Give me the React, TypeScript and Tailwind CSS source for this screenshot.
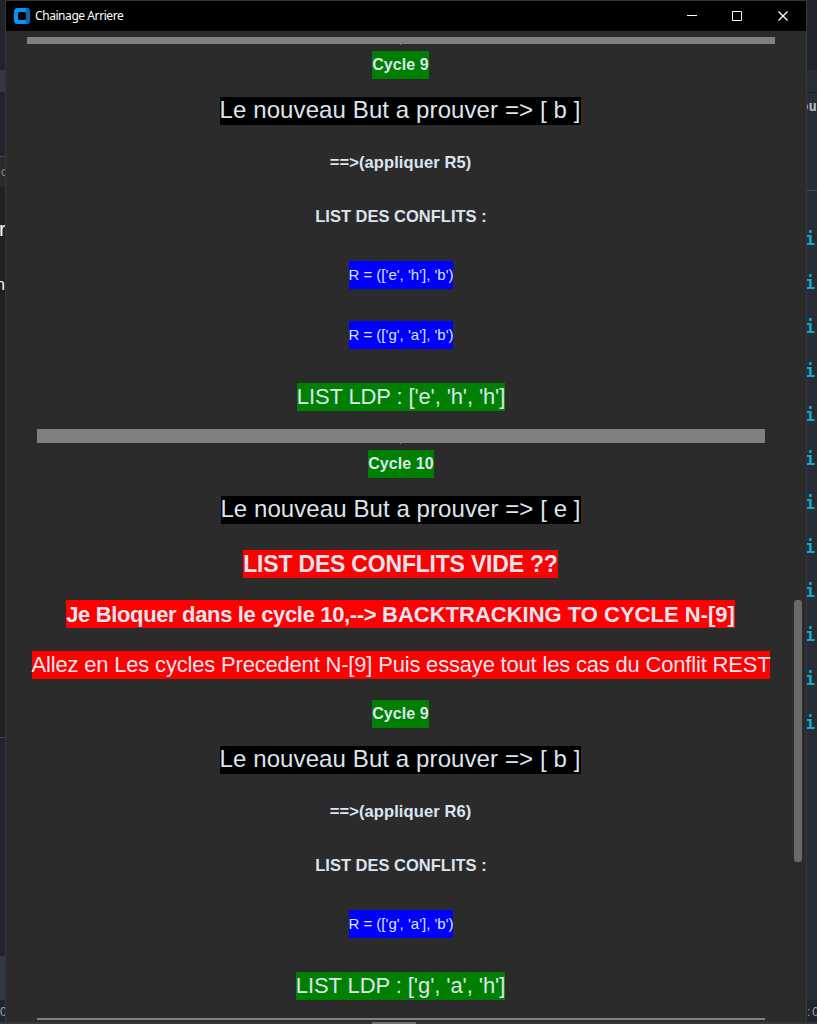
import React from "react";

type RowData = { text: React.ReactNode; cls: string };

const goal = "mt-[18px] pb-[2px] pr-px bg-black text-[24px]";
const cycle = "bg-[#008000] text-[16px] font-bold tracking-[0.1px]";
const rule = "w-[104px] bg-[#0000ff] text-[15px]";
const apply = "mt-[23px] w-[141px] mr-px text-[16.5px] font-bold tracking-[0.1px]";
const conflicts = "mt-[26px] w-[172px] text-[16.5px] font-bold";

const blocked = (
  <>
    <span className="tracking-[-0.35px]">{"Je Bloquer dans le cycle 10,--> "}</span>
    <span>BACKTRACKING TO CYCLE N-[9]</span>
  </>
);

const first: RowData[] = [
  { text: "Cycle 9", cls: `${cycle} mt-[6px] w-[57px] mr-px` },
  { text: "Le nouveau But a prouver => [ b ]", cls: `${goal} w-[361px] mr-px tracking-[0.1px]` },
  { text: "==>(appliquer R5)", cls: apply },
  { text: "LIST DES CONFLITS :", cls: conflicts },
  { text: "R = (['e', 'h'], 'b')", cls: `${rule} mt-[31px]` },
  { text: "R = (['g', 'a'], 'b')", cls: `${rule} mt-[32px]` },
  { text: "LIST LDP : ['e', 'h', 'h']", cls: "mt-[34px] w-[208px] bg-[#008000] text-[22px] tracking-[-0.12px]" },
];

const second: RowData[] = [
  { text: "Cycle 10", cls: `${cycle} mt-[6px] w-[66px]` },
  { text: "Le nouveau But a prouver => [ e ]", cls: `${goal} w-[360px] tracking-[0.08px]` },
  { text: "LIST DES CONFLITS VIDE ??", cls: "mt-[26px] w-[315px] mr-px bg-[#ff0000] text-[23px] font-bold tracking-[-0.2px]" },
  { text: blocked, cls: "mt-[22px] w-[669px] mr-px pt-[2px] bg-[#ff0000] text-[22px] font-bold" },
  { text: "Allez en Les cycles Precedent N-[9] Puis essaye tout les cas du Conflit REST", cls: "mt-[23px] w-[738px] bg-[#ff0000] text-[22px] tracking-[-0.19px]" },
  { text: "Cycle 9", cls: `${cycle} mt-[21px] w-[57px] mr-px` },
  { text: "Le nouveau But a prouver => [ b ]", cls: `${goal} w-[361px] mr-px tracking-[0.1px]` },
  { text: "==>(appliquer R6)", cls: apply },
  { text: "LIST DES CONFLITS :", cls: conflicts },
  { text: "R = (['g', 'a'], 'b')", cls: `${rule} mt-[31px]` },
  { text: "LIST LDP : ['g', 'a', 'h']", cls: "mt-[34px] w-[209px] mr-px bg-[#008000] text-[22px] tracking-[-0.08px]" },
];

function Row({ text, cls }: RowData) {
  return (
    <div className={`flex h-7 shrink-0 items-center justify-center whitespace-nowrap leading-7 text-[#dce4ee] ${cls}`}>
      <span>{text}</span>
    </div>
  );
}

function TitleBar() {
  return (
    <header className="flex h-[31px] shrink-0 items-center border-t border-[#353535] bg-black text-white">
      <svg className="ml-2 h-4 w-4" viewBox="0 0 16 16">
        <rect width="16" height="16" rx="3.5" fill="#0595f5" />
        <path d="M12 0h.5A3.5 3.5 0 0 1 16 3.5v9a3.5 3.5 0 0 1-3.5 3.5H12z" fill="#0768b8" />
        <rect x="4" y="4" width="8" height="8" rx="1.5" fill="#000" />
      </svg>
      <span className="ml-[5px] font-['Noto_Sans','Open_Sans',sans-serif] text-[12px] leading-4 tracking-[-0.43px]">Chainage Arriere</span>
      <svg className="ml-auto mr-[16px] h-[11px] w-[103px]" viewBox="0 0 103 11" fill="none" stroke="#fff">
        <path d="M0 4.5h10M45.5.5h9v9h-9z" />
        <path d="M91.5 .5l9 9M100.5 .5l-9 9" strokeWidth="1.3" />
      </svg>
    </header>
  );
}

function LeftEdge() {
  return (
    <aside className="flex w-[6px] shrink-0 flex-col overflow-hidden border-r border-[#333436] bg-[#21252b] whitespace-nowrap">
      <div className="mt-[70px] h-[22px] shrink-0 bg-[#333842]" />
      <div className="mt-[64px] h-[31px] shrink-0 border-t border-[#44474b] bg-[#2b2b2b]">
        <span className="block pl-px text-[12px] leading-[30px] text-[#898989]">c</span>
      </div>
      <div className="h-[550px] shrink-0 bg-[#202020] text-white">
        <span className="-ml-px block pt-[30px] text-[21px] leading-6">r</span>
        <span className="-ml-[4px] block pt-[34px] text-[16px] leading-5">n</span>
      </div>
      <div className="h-px shrink-0 bg-[#44474b]" />
      <div className="mt-[218px] h-[44px] shrink-0 bg-[#333842]" />
      <span className="block text-[12px] leading-[24px] tracking-[-1px] text-[#9da5b4]">0</span>
    </aside>
  );
}

function RightEdge() {
  return (
    <aside className="flex w-[11px] shrink-0 flex-col overflow-hidden border-l border-[#333842] bg-[#282c34] font-['DejaVu_Sans_Mono',monospace] whitespace-nowrap">
      <div className="h-[70px] shrink-0 bg-[#21252b]" />
      <div className="h-[23px] shrink-0 border-b border-[#1b1d22]" />
      <span className="-ml-[7px] block h-[97px] shrink-0 pt-px text-[14px] font-bold leading-6 text-[#b4bac5]">ou</span>
      <div className="h-px shrink-0 bg-[#464a52]" />
      <div className="flex h-[809px] shrink-0 flex-col pt-[26px] text-[17px] font-bold leading-[44px] text-[#12a8cd]">
        {Array.from({ length: 12 }, (_, i) => (
          <span key={i} className="-ml-[2px] block h-11 shrink-0">i</span>
        ))}
      </div>
      <div className="h-6 shrink-0 bg-[#21252b] font-['Liberation_Sans',sans-serif] text-[12px] leading-6 tracking-[2px] text-[#9da5b4]">:0</div>
    </aside>
  );
}

function Divider({ cls }: { cls: string }) {
  return (
    <>
      <div className={`shrink-0 bg-[#808080] ${cls}`} />
      <div className="mr-px h-px w-px shrink-0 bg-[#808080]" />
    </>
  );
}

export default function App() {
  return (
    <div className="flex h-[1024px] w-[817px] flex-col overflow-hidden bg-[#2b2b2b] font-['Liberation_Sans',Arial,sans-serif]">
      <div className="flex h-[1022px] shrink-0">
        <LeftEdge />
        <section className="flex w-[800px] shrink-0 flex-col">
          <TitleBar />
          <main className="flex h-[991px] overflow-hidden">
            <div className="flex w-[788px] shrink-0 flex-col items-center pl-[2px] pt-[6px]">
              <Divider cls="h-[7px] w-[748px]" />
              {first.map((r, i) => <Row key={i} {...r} />)}
              <Divider cls="mt-[18px] h-[14px] w-[728px]" />
              {second.map((r, i) => <Row key={i} {...r} />)}
              <div className="mt-[18px] h-[2px] w-[728px] shrink-0 bg-[#808080]" />
            </div>
            <div className="mt-[569px] h-[262px] w-2 rounded-[3px] bg-[#696969]" />
          </main>
        </section>
        <RightEdge />
      </div>
      <div className="h-[2px] shrink-0 bg-[#383638] pl-[372px]">
        <div className="h-[2px] w-11 bg-[#707070]" />
      </div>
    </div>
  );
}
